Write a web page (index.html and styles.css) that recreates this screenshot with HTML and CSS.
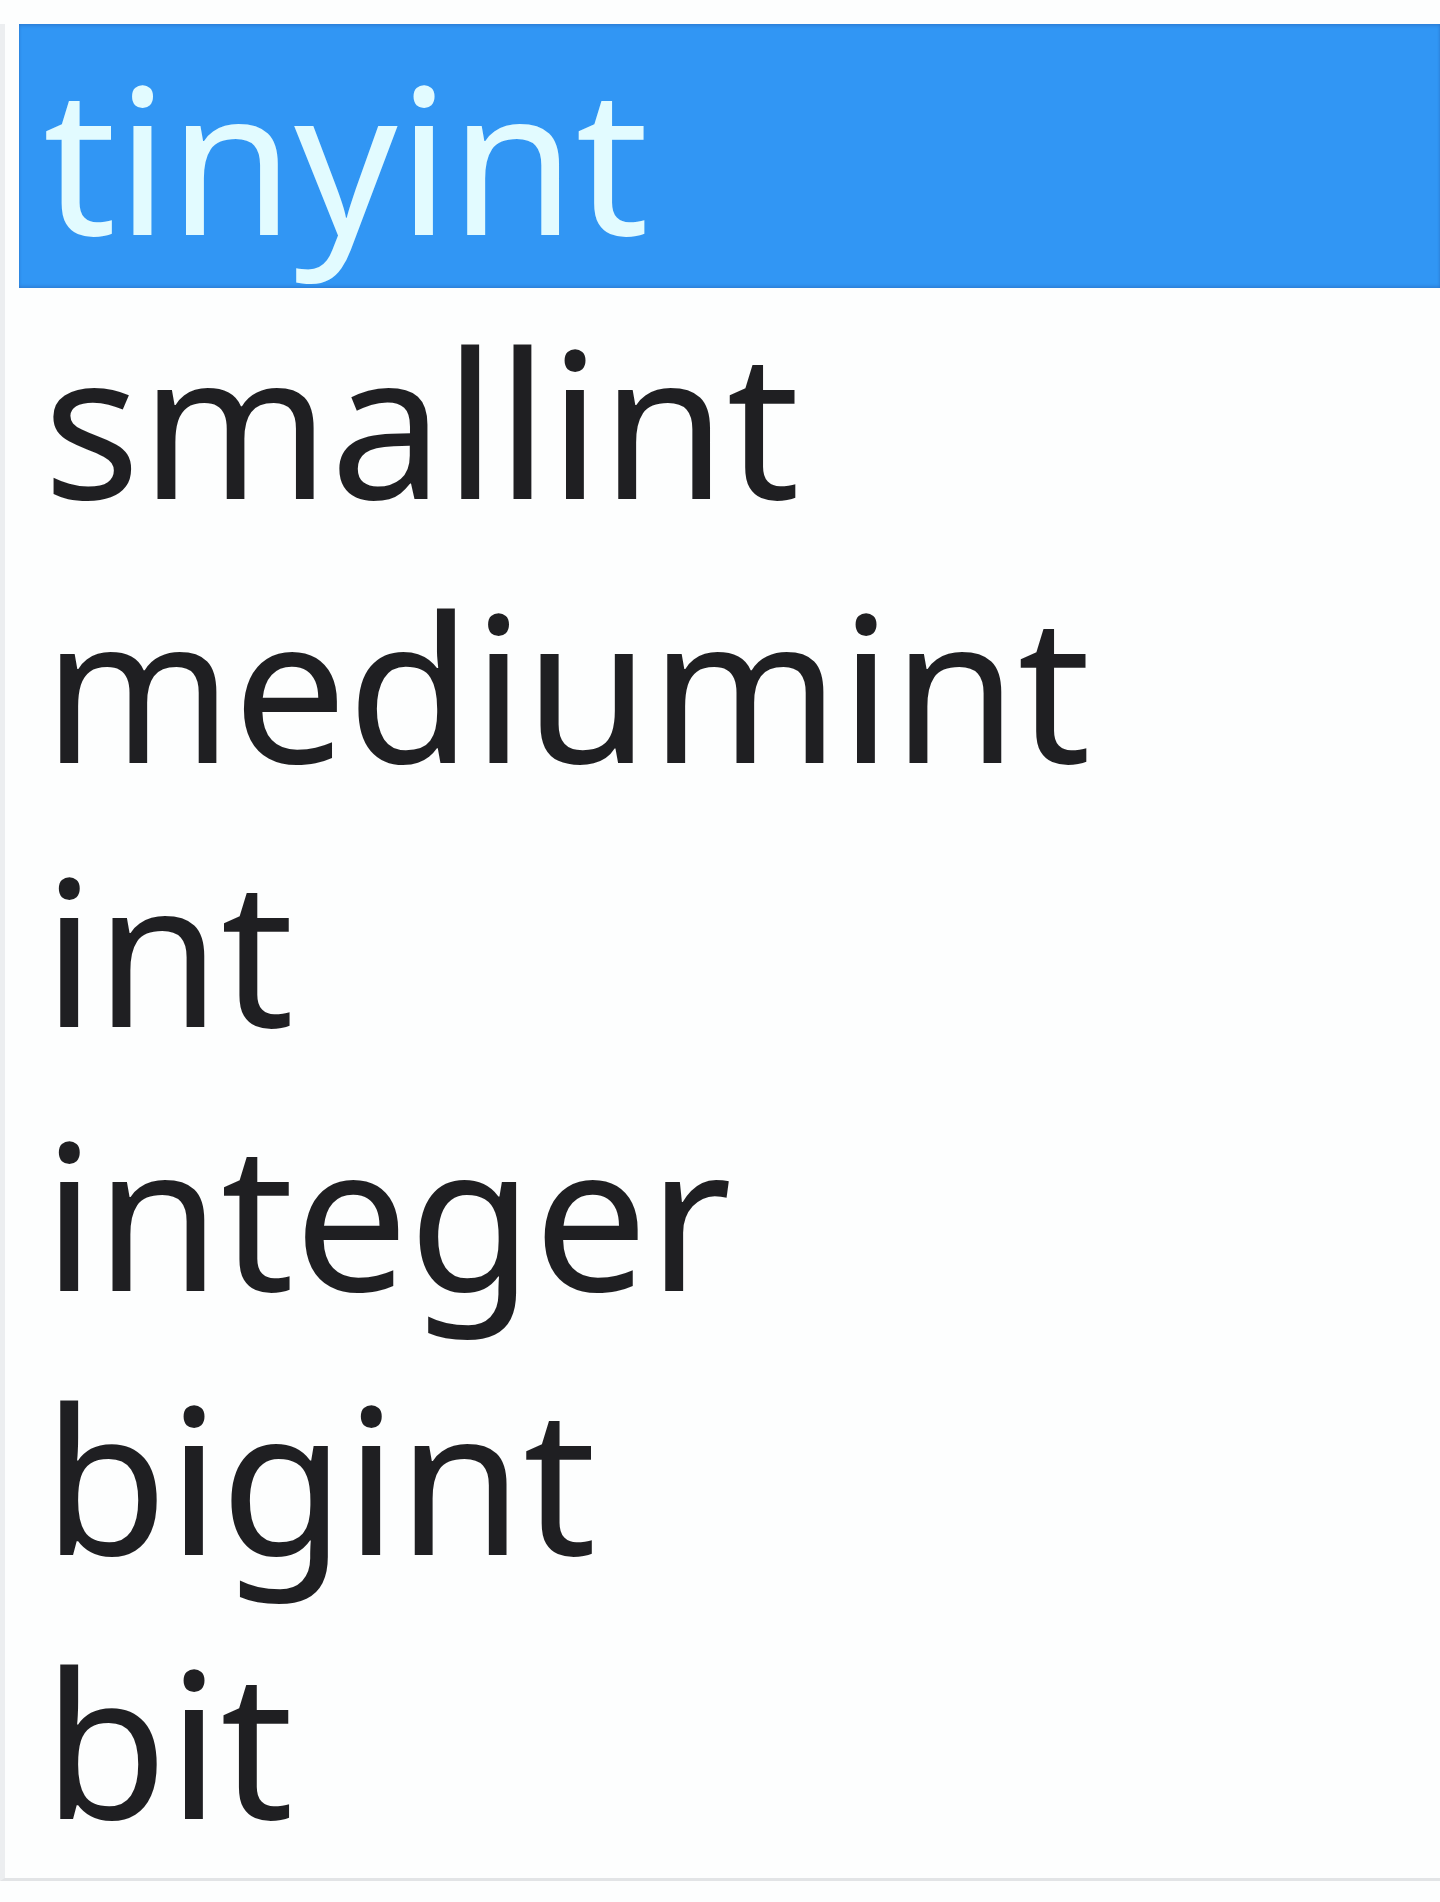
FILE: index.html
```html
<!DOCTYPE html>
<html>
<head>
<meta charset="utf-8">
<link rel="stylesheet" href="styles.css">
</head>
<body>
<div class="page">
  <ul class="list">
    <li class="item selected">tinyint</li>
    <li class="item">smallint</li>
    <li class="item">mediumint</li>
    <li class="item">int</li>
    <li class="item">integer</li>
    <li class="item">bigint</li>
    <li class="item">bit</li>
  </ul>
</div>
</body>
</html>
```
FILE: styles.css
```css
html, body {
  margin: 0;
  padding: 0;
  background: #ffffff;
}
.page {
  width: 1440px;
  height: 1902px;
  background: #fdfefe;
  padding-top: 24px;
  box-sizing: border-box;
}
.list {
  list-style: none;
  margin: 0;
  padding: 0 0 6px 14px;
  border-left: 5px solid #eceef0;
  border-bottom: 3px solid #e2e4e6;
  width: 1440px;
  box-sizing: border-box;
}
.item {
  font-family: "Noto Sans", "Open Sans", sans-serif;
  font-size: 203px;
  height: 264px;
  line-height: 264px;
  padding-left: 24px;
  color: #1f1f22;
  box-sizing: border-box;
  white-space: nowrap;
}
.item.selected {
  background: #3196f4;
  color: #e2fbff;
  box-shadow: inset 0 2px 3px rgba(40, 100, 180, 0.4), inset 0 -2px 3px rgba(40, 100, 180, 0.4);
}
```
